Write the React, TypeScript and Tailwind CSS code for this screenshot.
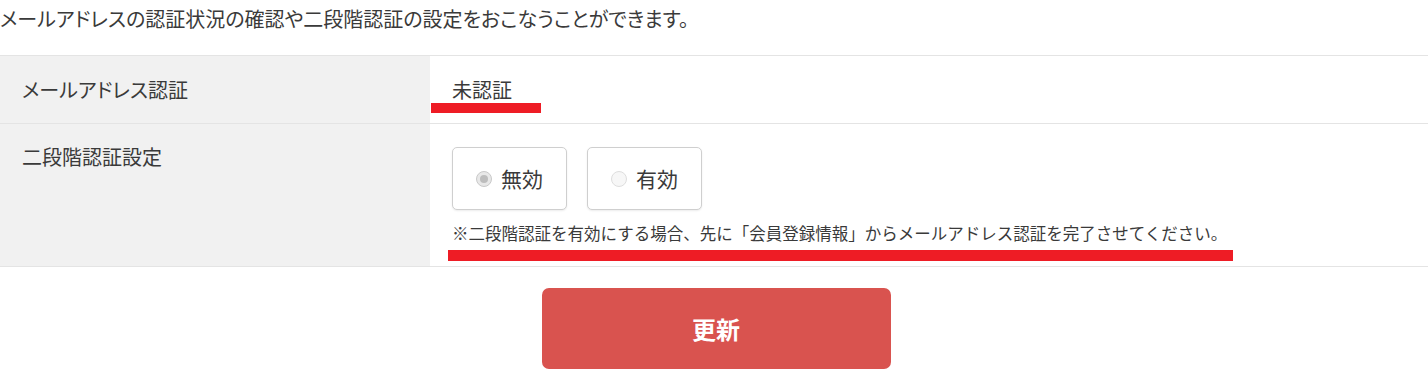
const Radio = ({ checked }: { checked?: boolean }) => (
  <span
    className={
      "flex items-center justify-center w-[16px] h-[16px] rounded-full border " +
      (checked ? "border-[#c9c9c9] bg-[#e8e8e8]" : "border-[#dedede] bg-[#f7f7f7]")
    }
  >
    {checked && <span className="w-[8px] h-[8px] rounded-full bg-[#bdbdbd]" />}
  </span>
);

const Choice = ({ label, checked }: { label: string; checked?: boolean }) => (
  <label className="flex items-center justify-center gap-[9px] w-[115px] h-[63px] border border-[#cfcfcf] rounded-[5px] bg-white shadow-[0_1px_2px_rgba(0,0,0,0.08)] text-[21px] leading-none">
    <Radio checked={checked} />
    <span>{label}</span>
  </label>
);

export default function App() {
  return (
    <div className="w-[1428px] h-[382px] bg-white text-[#3a3a3a] font-['Noto_Sans_CJK_JP','Noto_Sans',sans-serif] [font-feature-settings:'palt']">
      <p className="text-[20px] leading-[37px]">
        メールアドレスの認証状況の確認や二段階認証の設定をおこなうことができます。
      </p>

      <div className="mt-[18px] border-t border-[#e4e4e4]">
        <div className="flex border-b border-[#e4e4e4]">
          <div className="w-[430px] shrink-0 bg-[#f1f1f1] pl-[22px] pt-[22px] text-[20px] leading-[24px]">
            メールアドレス認証
          </div>
          <div className="pl-px pb-[10px]">
            <p className="pl-[21px] pt-[22px] text-[20px] leading-[24px]">未認証</p>
            <div className="mt-px w-[110px] h-[10px] bg-[#ee1c25]" />
          </div>
        </div>

        <div className="flex border-b border-[#e4e4e4]">
          <div className="w-[430px] shrink-0 bg-[#f1f1f1] pl-[22px] pt-[21px] text-[20px] leading-[24px]">
            二段階認証設定
          </div>
          <div className="pl-[22px] pt-[23px] pb-[5px]">
            <div className="flex gap-[20px]">
              <Choice label="無効" checked />
              <Choice label="有効" />
            </div>
            <p className="mt-[11px] text-[16.5px] leading-[24px] [font-feature-settings:normal]">
              ※二段階認証を有効にする場合、先に「会員登録情報」からメールアドレス認証を完了させてください。
            </p>
            <div className="mt-[5px] -ml-[4px] w-[785px] h-[11px] bg-[#ee1c25]" />
          </div>
        </div>
      </div>

      <div className="flex justify-center pl-[4px] mt-[21px]">
        <button className="w-[349px] h-[81px] rounded-[7px] bg-[#d9534f] text-white text-[24px] font-bold leading-none">
          更新
        </button>
      </div>
    </div>
  );
}
